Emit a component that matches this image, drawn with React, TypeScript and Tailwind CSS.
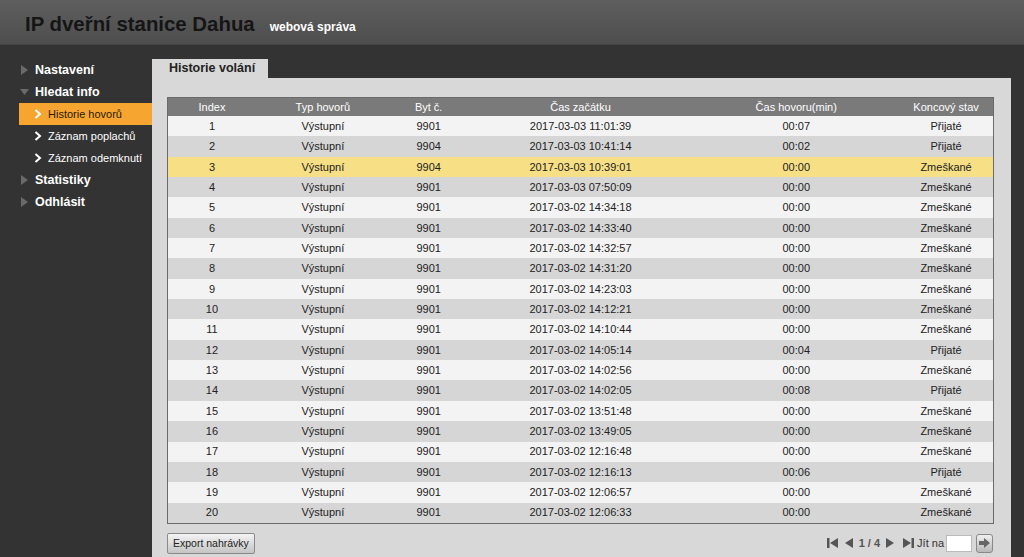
const rows = [
  ["1", "9901", "2017-03-03 11:01:39", "00:07", "Přijaté"],
  ["2", "9904", "2017-03-03 10:41:14", "00:02", "Přijaté"],
  ["3", "9904", "2017-03-03 10:39:01", "00:00", "Zmeškané"],
  ["4", "9901", "2017-03-03 07:50:09", "00:00", "Zmeškané"],
  ["5", "9901", "2017-03-02 14:34:18", "00:00", "Zmeškané"],
  ["6", "9901", "2017-03-02 14:33:40", "00:00", "Zmeškané"],
  ["7", "9901", "2017-03-02 14:32:57", "00:00", "Zmeškané"],
  ["8", "9901", "2017-03-02 14:31:20", "00:00", "Zmeškané"],
  ["9", "9901", "2017-03-02 14:23:03", "00:00", "Zmeškané"],
  ["10", "9901", "2017-03-02 14:12:21", "00:00", "Zmeškané"],
  ["11", "9901", "2017-03-02 14:10:44", "00:00", "Zmeškané"],
  ["12", "9901", "2017-03-02 14:05:14", "00:04", "Přijaté"],
  ["13", "9901", "2017-03-02 14:02:56", "00:00", "Zmeškané"],
  ["14", "9901", "2017-03-02 14:02:05", "00:08", "Přijaté"],
  ["15", "9901", "2017-03-02 13:51:48", "00:00", "Zmeškané"],
  ["16", "9901", "2017-03-02 13:49:05", "00:00", "Zmeškané"],
  ["17", "9901", "2017-03-02 12:16:48", "00:00", "Zmeškané"],
  ["18", "9901", "2017-03-02 12:16:13", "00:06", "Přijaté"],
  ["19", "9901", "2017-03-02 12:06:57", "00:00", "Zmeškané"],
  ["20", "9901", "2017-03-02 12:06:33", "00:00", "Zmeškané"],
]

function Tri({ down }: { down?: boolean }) {
  return (
    <svg width="9" height="10" viewBox="0 0 9 10" className="mr-[6px]">
      {down ? <path d="M0 2 L9 2 L4.5 8 Z" fill="#6a6a6a" /> : <path d="M1 0 L8 5 L1 10 Z" fill="#6a6a6a" />}
    </svg>
  )
}

function Chevron() {
  return (
    <svg width="8" height="10" viewBox="0 0 8 10" className="mr-[6px]">
      <path d="M1.5 1 L6 5 L1.5 9" fill="none" stroke="#fff" strokeWidth="2" />
    </svg>
  )
}

function TopItem({ label, down }: { label: string; down?: boolean }) {
  return (
    <div className="flex items-center h-[22px] pl-[20px] text-white font-bold text-[12.5px]">
      <Tri down={down} />
      {label}
    </div>
  )
}

function SubItem({ label, active }: { label: string; active?: boolean }) {
  return (
    <div
      className={
        "flex items-center h-[22px] text-[11px] " +
        (active ? "bg-[#f6a531] text-[#2a1a00] ml-[19px] pl-[15px]" : "text-white pl-[34px]")
      }
    >
      <Chevron />
      {label}
    </div>
  )
}

const cols = ["w-[88px]", "w-[134px]", "w-[78px]", "w-[226px]", "w-[206px]", "w-[94px]"]

export default function App() {
  return (
    <div className="w-[1024px] h-[557px] overflow-hidden bg-[#333333] flex flex-col font-['Liberation_Sans',Arial,sans-serif]">
      <div className="h-[45px] shrink-0 flex items-end pb-[10px] pl-[25px] bg-gradient-to-b from-[#5e5e5e] to-[#4e4e4e] border-b border-[#444]">
        <span className="text-[20.4px] font-bold text-[#151515] leading-none">IP dveřní stanice Dahua</span>
        <span className="ml-[15px] text-[12px] font-bold text-white leading-none mb-[1px]">webová správa</span>
      </div>
      <div className="flex flex-1 min-h-0">
        <div className="w-[152px] shrink-0 pt-[14px] flex flex-col">
          <TopItem label="Nastavení" />
          <TopItem label="Hledat info" down />
          <SubItem label="Historie hovorů" active />
          <SubItem label="Záznam poplachů" />
          <SubItem label="Záznam odemknutí" />
          <TopItem label="Statistiky" />
          <TopItem label="Odhlásit" />
        </div>
        <div className="flex-1 flex flex-col pt-[14px] pr-[14px]">
          <div className="flex">
            <div className="w-[116px] h-[19px] bg-[#d8d8d8] text-[12.5px] font-bold text-[#222] pl-[17px] leading-[19px]">
              Historie volání
            </div>
          </div>
          <div className="flex-1 bg-[#d8d8d8] pt-[19px] pl-[15px] pr-[17px]">
            <div className="border border-[#6a6a6a] w-[827px]">
              <div className="flex h-[18px] bg-[#7a7a7a] text-white text-[11px] items-center">
                {["Index", "Typ hovorů", "Byt č.", "Čas začátku", "Čas hovoru(min)", "Koncový stav"].map((h, i) => (
                  <div key={h} className={cols[i] + " text-center"}>
                    {h}
                  </div>
                ))}
              </div>
              {rows.map((r, idx) => (
                <div
                  key={r[0]}
                  className={
                    "flex h-[20.35px] items-center text-[11px] text-[#222] " +
                    (idx === 2 ? "bg-[#f6df84]" : idx % 2 === 0 ? "bg-[#f3f3f3]" : "bg-[#d6d6d6]")
                  }
                >
                  <div className={cols[0] + " text-center"}>{r[0]}</div>
                  <div className={cols[1] + " text-center"}>Výstupní</div>
                  <div className={cols[2] + " text-center"}>{r[1]}</div>
                  <div className={cols[3] + " text-center"}>{r[2]}</div>
                  <div className={cols[4] + " text-center"}>{r[3]}</div>
                  <div className={cols[5] + " text-center"}>{r[4]}</div>
                </div>
              ))}
            </div>
            <div className="flex items-center justify-between mt-[9px] w-[826px]">
              <button className="h-[21px] px-[5px] text-[10.5px] text-[#222] border border-[#8a8a8a] rounded-[2px] bg-gradient-to-b from-[#f4f4f4] to-[#c4c4c4]">
                Export nahrávky
              </button>
              <div className="flex items-center text-[11px] text-[#333]">
                <svg width="12" height="10" viewBox="0 0 12 10" className="mr-[5px]">
                  <rect x="0" y="0" width="2.5" height="10" fill="#555" />
                  <path d="M11 0 L3 5 L11 10 Z" fill="#555" />
                </svg>
                <svg width="9" height="10" viewBox="0 0 9 10" className="mr-[6px]">
                  <path d="M9 0 L1 5 L9 10 Z" fill="#555" />
                </svg>
                <span className="font-bold text-[#555]">1 / 4</span>
                <svg width="9" height="10" viewBox="0 0 9 10" className="ml-[6px] mr-[7px]">
                  <path d="M0 0 L8 5 L0 10 Z" fill="#555" />
                </svg>
                <svg width="12" height="10" viewBox="0 0 12 10" className="mr-[3px]">
                  <path d="M1 0 L9 5 L1 10 Z" fill="#555" />
                  <rect x="9.5" y="0" width="2.5" height="10" fill="#555" />
                </svg>
                <span>Jít na</span>
                <div className="w-[26px] h-[17px] bg-white border border-[#bbb] ml-[2px] mr-[4px]" />
                <div className="w-[17px] h-[19px] border border-[#888] rounded-[3px] bg-gradient-to-b from-[#f0f0f0] to-[#b8b8b8] flex items-center justify-center">
                  <svg width="11" height="10" viewBox="0 0 11 10">
                    <path d="M0 3 L5 3 L5 0 L11 5 L5 10 L5 7 L0 7 Z" fill="#666" />
                  </svg>
                </div>
              </div>
            </div>
          </div>
        </div>
        <div className="w-[6px] bg-[#555]" />
      </div>
    </div>
  )
}
